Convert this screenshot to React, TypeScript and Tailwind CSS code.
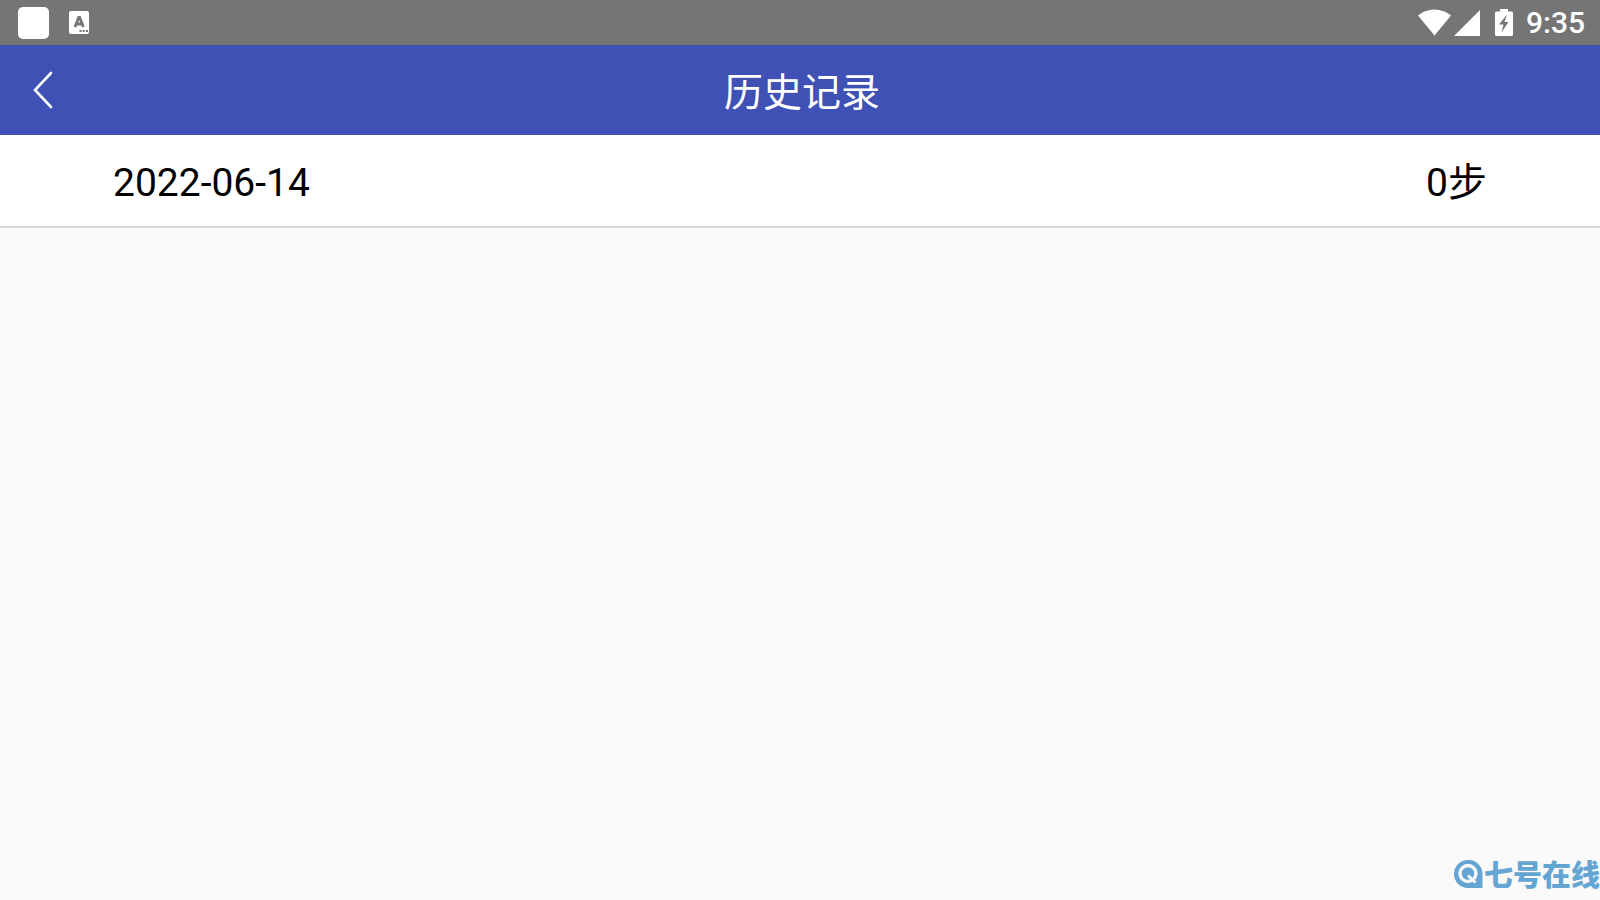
const records = [
    { date: '2022-06-14', steps: 0 },
]

const StatusBar = () => {
    return (
        <div className="flex h-[45px] items-center justify-between bg-[#757575] pl-[18px] pr-[15px] text-white">
            <div className="flex items-center gap-5">
                <div className="h-8 w-[31px] rounded-[5px] bg-white" />
                <svg width="20" height="23" viewBox="0 0 20 23" aria-hidden="true">
                    <rect width="20" height="23" rx="2" fill="#fff" />
                    <path d="M6 16 9.7 6.5h1L14.4 16M7.5 13h5.6" fill="none" stroke="#757575" strokeWidth="2.8" />
                    <path d="M10.5 19h2v2h-2zM13.7 19h2v2h-2zM17 19h2v2h-2z" fill="#757575" />
                </svg>
            </div>
            <div className="flex items-center">
                <svg width="33" height="27" viewBox="0 0 34 27" fill="#fff" aria-hidden="true">
                    <path d="M0 6.2C4.6 2.4 10.4 0 17 0s12.4 2.4 17 6.2L17 27z" />
                </svg>
                <svg className="ml-[3px]" width="26" height="26" viewBox="0 0 26 26" fill="#fff" aria-hidden="true">
                    <path d="M0 26 26 0v26z" />
                </svg>
                <svg className="ml-[15px]" width="18" height="27" viewBox="0 0 18 27" aria-hidden="true">
                    <path d="M5 0h8v2.5h3.5q1.5 0 1.5 1.5v21.500q0 1.5-1.5 1.5h-15Q0 27 0 25.500V4q0-1.5 1.5-1.5H5z" fill="#fff" />
                    <path d="M12 5.500 4 15.500h4.500L6.500 23.500 13.500 13H9.500z" fill="#757575" />
                </svg>
                <span className="ml-[13px] pt-px text-[30px] font-medium leading-[44px]">9:35</span>
            </div>
        </div>
    )
}

const Header = () => {
    return (
        <header className="grid h-[90px] grid-cols-[90px_1fr_86px] items-center bg-[#3f51b5] text-white">
            <button type="button" aria-label="返回" className="flex h-full items-center pl-[33px]">
                <svg width="20" height="38" viewBox="0 0 20 38" fill="none" stroke="#fff" strokeWidth="2.6" aria-hidden="true">
                    <path d="M18 2 2 19l16 17" strokeLinecap="round" />
                </svg>
            </button>
            <h1 className="pt-1.5 text-center text-[39px] leading-[84px]">历史记录</h1>
        </header>
    )
}

const Watermark = () => {
    return (
        <div className="absolute bottom-2 right-0 flex items-center gap-px text-[#64a5d3]">
            <svg width="29" height="28" viewBox="0 0 29 28" aria-hidden="true">
                <path d="M14 0a14 14 0 0 1 14.5 14v14H14A14 14 0 0 1 14 0z" fill="currentColor" />
                <circle cx="14" cy="13.5" r="8" fill="none" stroke="#fafafa" strokeWidth="3.4" />
                <path d="m14 15.5 7.5 7" stroke="#fafafa" strokeWidth="3" />
            </svg>
            <span className="pt-1 text-[29px] font-black leading-8">七号在线</span>
        </div>
    )
}

const App = () => {
    return (
        <div className="relative flex min-h-screen flex-col bg-[#fafafa] font-[Roboto,'Noto_Sans_CJK_SC',sans-serif]">
            <StatusBar />
            <Header />
            <main className="flex-1">
                <ul>
                    {records.map((record) => (
                        <li
                            key={record.date}
                            className="flex items-center justify-between border-b-2 border-[#d9d9d9] bg-white px-[113px] pt-1.5 text-[39px] leading-[85px] text-black"
                        >
                            <span>{record.date}</span>
                            <span>{record.steps}步</span>
                        </li>
                    ))}
                </ul>
            </main>
            <Watermark />
        </div>
    )
}

export default App
